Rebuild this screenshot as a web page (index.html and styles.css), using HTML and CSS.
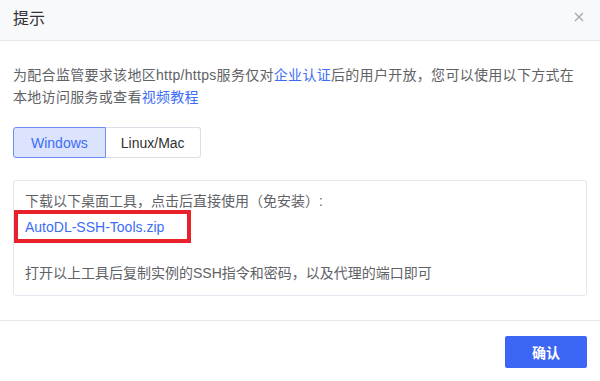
FILE: index.html
```html
<!DOCTYPE html>
<html lang="zh-CN">
<head>
    <meta charset="UTF-8">
    <meta name="viewport" content="width=device-width, initial-scale=1.0">
    <title>提示</title>
    <link rel="stylesheet" href="styles.css">
</head>
<body>
    <div class="dialog">
        <div class="dialog-header">
            <span class="dialog-title">提示</span>
            <svg class="dialog-close" width="10" height="10" viewBox="0 0 10 10">
                <path d="M1 1L9 9M9 1L1 9" stroke="#a3a6ad" stroke-width="1.2" fill="none"/>
            </svg>
        </div>

        <div class="dialog-body">
            <p class="notice">为配合监管要求该地区http/https服务仅对<a href="#">企业认证</a>后的用户开放，您可以使用以下方式在本地访问服务或查看<a href="#">视频教程</a></p>

            <div class="tabs">
                <button class="tab active">Windows</button>
                <button class="tab">Linux/Mac</button>
            </div>

            <div class="panel">
                <p>下载以下桌面工具，点击后直接使用（免安装）:</p>
                <p><span class="marked"><a href="#">AutoDL-SSH-Tools.zip</a></span></p>
                <p class="last">打开以上工具后复制实例的SSH指令和密码，以及代理的端口即可</p>
            </div>
        </div>

        <div class="dialog-footer">
            <button class="btn-primary">确认</button>
        </div>
    </div>
</body>
</html>
```

FILE: styles.css
```css
* { margin: 0; padding: 0; box-sizing: border-box; }
body { font-family: "Liberation Sans", "Noto Sans CJK SC", sans-serif; background: #fff; color: #606266; font-size: 14px; }
a { color: #3d6df5; text-decoration: none; }

.dialog { width: 600px; height: 381px; background: #fff; }

.dialog-header { height: 41px; background: #f8f9fb; border-bottom: 1px solid #e6e8ee; display: flex; align-items: center; justify-content: space-between; padding: 0 16px 7px 13px; }
.dialog-title { font-size: 16px; color: #303133; }

.dialog-body { padding: 23px 13px 0; }
.notice { line-height: 22px; letter-spacing: 0.3px; }

.tabs { display: flex; margin-top: 19px; }
.tab { height: 31px; padding: 0 15px; font-family: inherit; font-size: 14px; color: #303133; background: #fff; border: 1px solid #dcdfe6; cursor: pointer; }
.tab:first-child { border-radius: 3px 0 0 3px; }
.tab:last-child { border-radius: 0 3px 3px 0; border-left: none; }
.tab.active { background: #dbe3fd; color: #3d6df5; border-color: #6c8ef6; padding: 0 17px; }

.panel { margin-top: 22px; border: 1px solid #e4e7ed; border-radius: 3px; padding: 9px 11px 11px; line-height: 22px; }
.panel p { margin-bottom: 4px; }
.panel p.last { margin-top: 24px; margin-bottom: 0; }

.marked { position: relative; display: inline-block; }
.marked::after { content: ""; position: absolute; left: -11px; right: -27px; top: -6px; bottom: -5px; border: 4px solid #e8212a; }

.dialog-footer { margin-top: 24px; border-top: 1px solid #e6e8ee; display: flex; justify-content: flex-end; padding: 15px 13px 0; }
.btn-primary { width: 82px; height: 32px; background: #3c66f5; color: #fff; border: none; border-radius: 2px; font-family: inherit; font-size: 14px; font-weight: bold; }
```
